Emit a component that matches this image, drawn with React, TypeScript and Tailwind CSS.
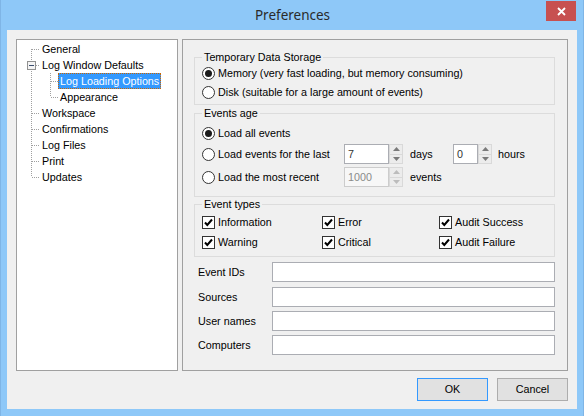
import React from "react";

type TreeRow = {
  label: string;
  level: 0 | 1;
  kind: "first" | "mid" | "last" | "parent" | "childFirst" | "childLast";
  selected?: boolean;
};

const rows: TreeRow[] = [
  { label: "General", level: 0, kind: "first" },
  { label: "Log Window Defaults", level: 0, kind: "parent" },
  { label: "Log Loading Options", level: 1, kind: "childFirst", selected: true },
  { label: "Appearance", level: 1, kind: "childLast" },
  { label: "Workspace", level: 0, kind: "mid" },
  { label: "Confirmations", level: 0, kind: "mid" },
  { label: "Log Files", level: 0, kind: "mid" },
  { label: "Print", level: 0, kind: "mid" },
  { label: "Updates", level: 0, kind: "last" },
];

const dot = { stroke: "#a0a0a0", strokeWidth: 1, strokeDasharray: "1 1" };

const Gutter = ({ row }: { row: TreeRow }) => {
  if (row.level === 1) {
    return (
      <svg width="41" height="16" className="shrink-0" shapeRendering="crispEdges">
        <line x1="14.5" y1="0" x2="14.5" y2="16" {...dot} />
        <line x1="33.5" y1="0" x2="33.5" y2={row.kind === "childLast" ? 8 : 16} {...dot} />
        <line x1="34" y1="8.5" x2="41" y2="8.5" {...dot} />
      </svg>
    );
  }
  const top = row.kind === "first" ? 8 : 0;
  const bottom = row.kind === "last" ? 8 : 16;
  return (
    <svg width="23" height="16" className="shrink-0" shapeRendering="crispEdges">
      <line x1="14.5" y1={top} x2="14.5" y2={bottom} {...dot} />
      {row.kind === "parent" ? (
        <>
          <rect x="10.5" y="4.5" width="8" height="8" fill="#f4f4f4" stroke="#919191" />
          <line x1="12" y1="8.5" x2="17" y2="8.5" stroke="#3a4d6e" />
          <line x1="19" y1="8.5" x2="23" y2="8.5" {...dot} />
        </>
      ) : (
        <line x1="15" y1="8.5" x2="23" y2="8.5" {...dot} />
      )}
    </svg>
  );
};

const Radio = ({ checked }: { checked?: boolean }) => (
  <span className="w-[13px] h-[13px] rounded-full border border-[#333] bg-white flex items-center justify-center shrink-0">
    {checked && <span className="w-[7px] h-[7px] rounded-full bg-[#1a1a1a]" />}
  </span>
);

const Check = () => (
  <span className="w-[13px] h-[13px] border border-[#333] bg-white flex items-center justify-center shrink-0">
    <svg width="11" height="11" viewBox="0 0 11 11">
      <path d="M2 5.5 L4.3 8 L9 2.5" fill="none" stroke="#000" strokeWidth="2" />
    </svg>
  </span>
);

const Spin = ({ disabled }: { disabled?: boolean }) => (
  <div className="w-[14px] h-[20px] flex flex-col border border-[#d9d9d9] bg-[#ececec] shrink-0">
    <div className="flex-1 flex items-center justify-center border-b border-[#d9d9d9]">
      <svg width="7" height="4">
        <path d="M0 4 L3.5 0 L7 4 Z" fill={disabled ? "#bcbcbc" : "#7a7a7a"} />
      </svg>
    </div>
    <div className="flex-1 flex items-center justify-center">
      <svg width="7" height="4">
        <path d="M0 0 L3.5 4 L7 0 Z" fill={disabled ? "#bcbcbc" : "#7a7a7a"} />
      </svg>
    </div>
  </div>
);

const Group = ({ title, children, className }: { title: string; children: React.ReactNode; className?: string }) => (
  <fieldset className={"border border-[#dcdcdc] px-[7px] " + (className ?? "")}>
    <legend className="px-[2px] leading-[14px]">{title}</legend>
    {children}
  </fieldset>
);

const Field = ({ label, className }: { label: string; className?: string }) => (
  <div className={"flex items-center h-[20px] " + (className ?? "")}>
    <span className="w-[74px] shrink-0">{label}</span>
    <div className="w-[283px] h-[20px] border border-[#abadb3] bg-white" />
  </div>
);

export default function App() {
  return (
    <div className="w-[584px] h-[416px] bg-[#8ec8f8] border-x border-[#7fb5e6] flex flex-col font-['Liberation_Sans',Arial,sans-serif] text-[10.75px] text-black">
      <div className="h-[30px] flex items-start shrink-0">
        <div className="flex-1 pl-[38px] text-center leading-[31px] text-[13.5px] text-[#2a2a2a] font-['Noto_Sans',sans-serif]">
          Preferences
        </div>
        <div className="w-[30px] h-[20px] mt-[1px] mr-[7px] bg-[#c75050] flex items-center justify-center">
          <svg width="9" height="9" viewBox="0 0 9 9">
            <path d="M1 1 L8 8 M8 1 L1 8" stroke="#fff" strokeWidth="1.8" />
          </svg>
        </div>
      </div>

      <div className="mx-[6px] h-[379px] bg-[#f0f0f0] flex flex-col px-[9px] pt-[9px] shrink-0">
        <div className="flex gap-[4px] h-[332px]">
          <div className="w-[162px] h-full border border-[#a0a0a0] bg-white pt-[1px]">
            {rows.map((r) => (
              <div key={r.label} className="flex h-[16px] items-center">
                <Gutter row={r} />
                <span
                  className={
                    "leading-[14px] px-[1px] border whitespace-nowrap " +
                    (r.selected ? "bg-[#3399ff] text-white border-dotted border-[#cc6600]" : "border-transparent")
                  }
                >
                  {r.label}
                </span>
              </div>
            ))}
          </div>

          <div className="w-[386px] h-full border border-[#a0a0a0] pl-[11px] pr-[12px] pt-[10px]">
            <Group title="Temporary Data Storage" className="pb-[2px]">
              <div className="flex items-center gap-[3px] h-[19px]">
                <Radio checked />
                <span>Memory (very fast loading, but memory consuming)</span>
              </div>
              <div className="flex items-center gap-[3px] h-[19px]">
                <Radio />
                <span>Disk (suitable for a large amount of events)</span>
              </div>
            </Group>

            <Group title="Events age" className="mt-[1px] pt-[4px] pb-[8px]">
              <div className="flex items-center gap-[3px] h-[19px]">
                <Radio checked />
                <span>Load all events</span>
              </div>
              <div className="flex items-center h-[22px]">
                <div className="w-[142px] flex items-center gap-[3px]">
                  <Radio />
                  <span>Load events for the last</span>
                </div>
                <div className="w-[45px] h-[20px] border border-[#abadb3] bg-white px-[3px] leading-[18px] text-[#333]">7</div>
                <Spin />
                <span className="w-[43px] pl-[7px] box-content">days</span>
                <div className="w-[25px] h-[20px] border border-[#abadb3] bg-white px-[3px] leading-[18px] text-[#333]">0</div>
                <Spin />
                <span className="pl-[6px]">hours</span>
              </div>
              <div className="flex items-center h-[22px] mt-[1px]">
                <div className="w-[142px] flex items-center gap-[3px]">
                  <Radio />
                  <span>Load the most recent</span>
                </div>
                <div className="w-[45px] h-[20px] border border-[#cccccc] bg-[#f7f7f7] px-[3px] leading-[18px] text-[#8a8a8a]">1000</div>
                <Spin disabled />
                <span className="pl-[7px]">events</span>
              </div>
            </Group>

            <Group title="Event types" className="pt-[1px] pb-[4px]">
              <div className="grid grid-cols-[120px_117px_1fr]">
                {["Information", "Error", "Audit Success", "Warning", "Critical", "Audit Failure"].map((t) => (
                  <div key={t} className="flex items-center gap-[3px] h-[20px]">
                    <Check />
                    <span>{t}</span>
                  </div>
                ))}
              </div>
            </Group>

            <div className="flex flex-col pl-[4px]">
              <Field label="Event IDs" className="mt-[5px]" />
              <Field label="Sources" className="mt-[5px]" />
              <Field label="User names" className="mt-[4px]" />
              <Field label="Computers" className="mt-[4px]" />
            </div>
          </div>
        </div>

        <div className="flex justify-end gap-[9px] mt-[7px]">
          <button className="w-[71px] h-[23px] border border-[#3399ff] bg-[#e1e1e1]">OK</button>
          <button className="w-[71px] h-[23px] border border-[#adadad] bg-[#e1e1e1]">Cancel</button>
        </div>
      </div>
    </div>
  );
}
